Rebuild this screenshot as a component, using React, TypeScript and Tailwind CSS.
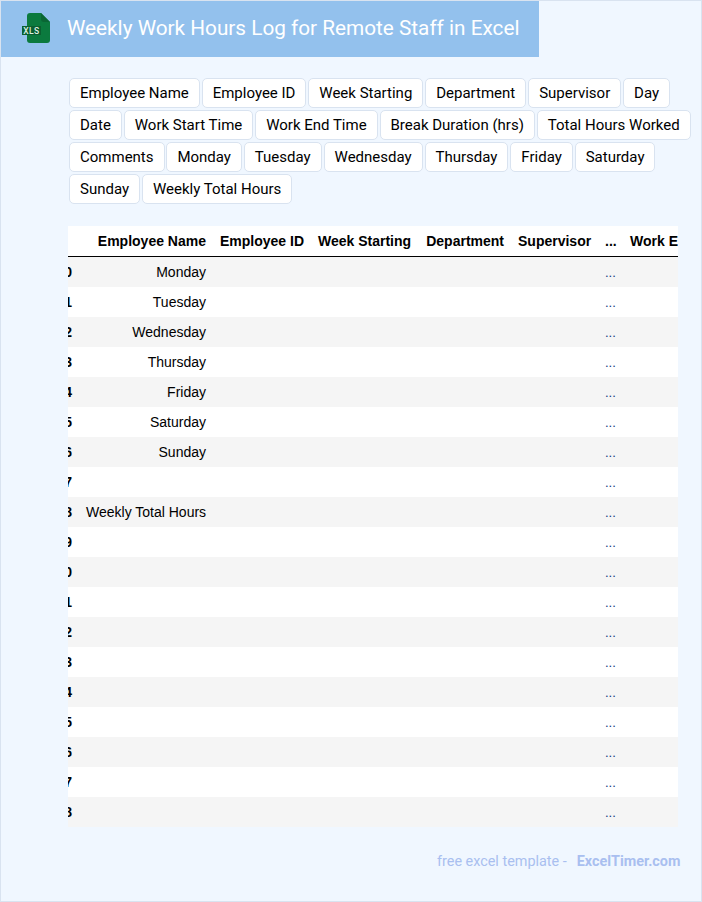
const tags = [
  "Employee Name", "Employee ID", "Week Starting", "Department", "Supervisor", "Day",
  "Date", "Work Start Time", "Work End Time", "Break Duration (hrs)", "Total Hours Worked",
  "Comments", "Monday", "Tuesday", "Wednesday", "Thursday", "Friday", "Saturday",
  "Sunday", "Weekly Total Hours",
];

const names: Record<number, string> = {
  0: "Monday", 1: "Tuesday", 2: "Wednesday", 3: "Thursday", 4: "Friday",
  5: "Saturday", 6: "Sunday", 8: "Weekly Total Hours",
};

const rows = Array.from({ length: 19 }, (_, i) => i);

function XlsIcon() {
  return (
    <svg width="30" height="32" viewBox="0 0 30 32" className="shrink-0">
      <path d="M6 3a3 3 0 0 1 3-3h11l9 9v18a3 3 0 0 1-3 3H9a3 3 0 0 1-3-3z" fill="#0b7a3e" />
      <path d="M20 0l9 9h-6a3 3 0 0 1-3-3z" fill="#0a6634" />
      <rect x="1" y="13" width="19" height="9" fill="#0a5f30" />
      <text x="10.5" y="20.6" textAnchor="middle" fontSize="8.5" fontWeight="500" letterSpacing="0.4" fill="#dcefe3" fontFamily="Roboto, sans-serif">XLS</text>
    </svg>
  );
}

export default function App() {
  return (
    <div className="w-[702px] h-[902px] bg-[#f0f7ff] border border-[#d9e3f0] font-['Roboto',sans-serif] overflow-hidden">
      <div className="w-[538px] h-[56px] bg-[#93c1ed] flex items-center pl-[20px] gap-[16px]">
        <XlsIcon />
        <h1 className="text-[20.75px] text-white font-normal leading-[24px] mb-[2px]">Weekly Work Hours Log for Remote Staff in Excel</h1>
      </div>

      <div className="ml-[68px] mt-[21px] w-[626px] flex flex-wrap gap-x-[1.9px] gap-y-[2px]">
        {tags.map((t) => (
          <span key={t} className="h-[30px] px-[10px] flex items-center bg-white border border-[#d9e3f0] rounded-[5px] text-[15px] text-black">
            {t}
          </span>
        ))}
      </div>

      <div className="ml-[67px] mt-[22px] w-[610px] overflow-hidden">
        <table className="-ml-[21px] border-separate border-spacing-0 w-[688px] table-fixed font-['Liberation_Sans',sans-serif] text-[14px] text-black">
          <colgroup>
            <col className="w-[32px]" />
            <col className="w-[134px]" />
            <col className="w-[98px]" />
            <col className="w-[107px]" />
            <col className="w-[93px]" />
            <col className="w-[87px]" />
            <col className="w-[25px]" />
            <col className="w-[112px]" />
          </colgroup>
          <thead>
            <tr className="h-[31px] bg-white">
              <th className="px-[7px] border-b border-black"></th>
              <th className="px-[7px] border-b border-black text-right font-bold whitespace-nowrap">Employee Name</th>
              <th className="px-[7px] border-b border-black text-right font-bold whitespace-nowrap">Employee ID</th>
              <th className="px-[7px] border-b border-black text-right font-bold whitespace-nowrap">Week Starting</th>
              <th className="px-[7px] border-b border-black text-right font-bold whitespace-nowrap">Department</th>
              <th className="px-[7px] border-b border-black text-right font-bold whitespace-nowrap">Supervisor</th>
              <th className="px-[7px] border-b border-black text-right font-bold">...</th>
              <th className="px-[7px] border-b border-black text-right font-bold whitespace-nowrap">Work End Time</th>
            </tr>
          </thead>
          <tbody>
            {rows.map((i) => (
              <tr key={i} className={i % 2 === 0 ? "h-[30px] bg-[#f5f5f5]" : "h-[30px] bg-white"}>
                <td className="px-[7px] text-right font-bold">{i}</td>
                <td className="px-[7px] text-right whitespace-nowrap">{names[i] ?? ""}</td>
                <td></td>
                <td></td>
                <td></td>
                <td></td>
                <td className="pl-[7px] pr-[8px] pt-[1px] text-right text-[13px] text-[#123a80]">...</td>
                <td></td>
              </tr>
            ))}
          </tbody>
        </table>
      </div>

      <div className="mt-[25px] ml-[436px] flex items-center text-[14.4px] text-[#a9bff0] leading-[20px]">
        <span>free excel template -</span>
        <span className="ml-[10px] font-bold">ExcelTimer.com</span>
      </div>
    </div>
  );
}
